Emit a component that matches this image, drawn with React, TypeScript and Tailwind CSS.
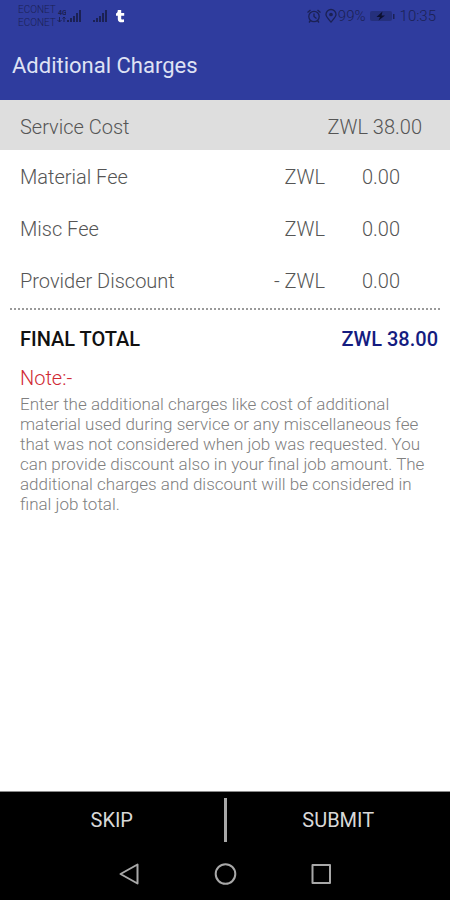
import React, { useState } from "react";

interface Charge {
  id: string;
  label: string;
  negative?: boolean;
}

const CURRENCY = "ZWL";
const SERVICE_COST = 38;

const charges: Charge[] = [
  { id: "material", label: "Material Fee" },
  { id: "misc", label: "Misc Fee" },
  { id: "discount", label: "Provider Discount", negative: true },
];

const SignalIcon: React.FC = () => (
  <svg className="h-4 w-4" viewBox="0 0 16 16" fill="currentColor" aria-hidden="true">
    <rect x="1" y="12" width="2" height="2" />
    <rect x="4" y="10" width="2" height="4" />
    <rect x="7" y="8" width="2" height="6" />
    <rect x="10" y="5" width="2" height="9" />
    <rect x="13" y="2" width="2" height="12" />
  </svg>
);

const StatusBar: React.FC = () => (
  <div className="flex h-8 items-center justify-between pl-4 pr-3.5 text-[#1b2154]">
    <div className="flex items-center">
      <div className="w-10 pl-0.5 text-[10px] leading-[13px]">
        <div>ECONET</div>
        <div>ECONET</div>
      </div>
      <div className="flex items-center">
        <svg className="h-4 w-2.5" viewBox="0 0 10 16" aria-hidden="true">
          <text x="2" y="7" fontSize="7" fontWeight="700" fill="currentColor">
            4G
          </text>
          <path d="M3.5 9v5M1.5 12l2 2 2-2M8 14V9M6.5 10.5 8 9l1.500 1.500" fill="none" stroke="currentColor" />
        </svg>
        <SignalIcon />
      </div>
      <div className="ml-2.5">
        <SignalIcon />
      </div>
      <svg className="ml-1.5 h-4 w-3" viewBox="0 0 12 16" fill="#fff" aria-hidden="true">
        <path d="M3.800 2h3.400v3h3v2.700H7.200v2.800c0 1 .8 1.300 2.800.8V14c-3.700 1-6.200-.2-6.200-3V7.700H2V5.400C3.300 5 3.800 3.700 3.800 2z" />
      </svg>
    </div>
    <div className="flex items-center">
      <svg className="h-4 w-4" viewBox="0 0 16 16" fill="none" stroke="currentColor" strokeWidth="1.300" aria-hidden="true">
        <circle cx="8" cy="8.500" r="5.200" />
        <path d="M8 5.500v3l2.500 2M1.500 4.500l3-2.500M14.500 4.500l-3-2.500M4.500 12.500 3 14.500M11.500 12.500l1.500 2" />
      </svg>
      <svg className="ml-0.5 h-4 w-3.5" viewBox="0 0 14 16" fill="none" stroke="currentColor" strokeWidth="1.300" aria-hidden="true">
        <path d="M7 14C4 10.500 2 8.700 2 6.500a5 5 0 0 1 10 0c0 2.200-2 4-5 7.500z" />
        <circle cx="7" cy="6.500" r="1.200" fill="currentColor" />
      </svg>
      <span className="text-[15px] leading-4">99%</span>
      <svg className="ml-0.5 h-4 w-7" viewBox="0 0 28 16" aria-hidden="true">
        <rect x="2" y="3" width="22" height="10" rx="2" fill="currentColor" opacity="0.45" />
        <path d="M25 6h1.500v5H25z" fill="currentColor" />
        <path d="M14.500 3.500 8.500 9h3.500l-1.500 3.500L17 7.500h-3.500z" fill="#0c1030" />
      </svg>
      <span className="ml-1 text-[15px] leading-4">10:35</span>
    </div>
  </div>
);

const App: React.FC = () => {
  const [amounts, setAmounts] = useState<Record<string, string>>({
    material: "0.00",
    misc: "0.00",
    discount: "0.00",
  });

  const total = charges.reduce((sum, charge) => {
    const value = parseFloat(amounts[charge.id]) || 0;
    return charge.negative ? sum - value : sum + value;
  }, SERVICE_COST);

  return (
    <div className="flex min-h-screen flex-col bg-white font-['Roboto',sans-serif] font-light text-[#555555]">
      <header className="bg-[#2f3c9e]">
        <StatusBar />
        <h1 className="px-3 pt-5 pb-5 text-[22px] leading-7 font-normal text-[#dfe2f4]">
          Additional Charges
        </h1>
      </header>

      <main className="flex-1">
        <div className="flex h-[50px] items-center justify-between bg-[#dedede] pt-1 pl-5 pr-7 text-xl">
          <span>Service Cost</span>
          <span>
            {CURRENCY} {SERVICE_COST.toFixed(2)}
          </span>
        </div>

        {/* Editable charges */}
        {charges.map((charge) => (
          <div key={charge.id} className="flex h-[52px] items-center pt-0.5 pl-5 pr-[50px] text-xl">
            <label htmlFor={charge.id} className="flex-1">
              {charge.label}
            </label>
            <span>
              {charge.negative && "- "}
              {CURRENCY}
            </span>
            <input
              id={charge.id}
              inputMode="decimal"
              className="w-[75px] bg-transparent text-right outline-none"
              value={amounts[charge.id]}
              onChange={(e) =>
                setAmounts((prev) => ({ ...prev, [charge.id]: e.target.value }))
              }
            />
          </div>
        ))}

        {/* Total */}
        <div className="mx-2.5 mt-0.5 border-t-2 border-dotted border-[#9a9a9a]" />
        <div className="flex h-[58px] items-center justify-between pl-5 pr-3 text-xl font-medium">
          <span className="text-[#111111]">FINAL TOTAL</span>
          <span className="text-[#141c80]">
            {CURRENCY} {total.toFixed(2)}
          </span>
        </div>

        <section className="-mt-0.5 pl-5 pr-3">
          <h2 className="text-xl leading-6 text-[#d02a34]">Note:-</h2>
          <p className="mt-1 text-[17px] leading-5 text-[#808080]">
            Enter the additional charges like cost of additional material used
            during service or any miscellaneous fee that was not considered when
            job was requested. You can provide discount also in your final job
            amount. The additional charges and discount will be considered in
            final job total.
          </p>
        </section>
      </main>

      <footer className="border-t border-[#8a8a8a] bg-black text-[#d8d8d8]">
        <div className="flex h-14 items-center">
          <button type="button" className="flex-1 text-xl font-normal">
            SKIP
          </button>
          <span className="h-11 w-[3px] bg-[#a8a8a8]" />
          <button type="button" className="flex-1 text-xl font-normal">
            SUBMIT
          </button>
        </div>
        <nav className="flex h-[52px] items-center justify-center gap-[72px] text-[#a8a8a8]">
          <button type="button" aria-label="Back">
            <svg className="h-6 w-6" viewBox="0 0 24 24" fill="none" stroke="currentColor" strokeWidth="2" strokeLinejoin="round">
              <path d="M20.500 2.500v19L3.500 12z" />
            </svg>
          </button>
          <button type="button" aria-label="Home">
            <svg className="h-6 w-6" viewBox="0 0 24 24" fill="none" stroke="currentColor" strokeWidth="2">
              <circle cx="12.500" cy="12" r="9.800" />
            </svg>
          </button>
          <button type="button" aria-label="Recent apps">
            <svg className="h-6 w-6" viewBox="0 0 24 24" fill="none" stroke="currentColor" strokeWidth="2" strokeLinejoin="round">
              <rect x="3.500" y="3" width="17.500" height="18" />
            </svg>
          </button>
        </nav>
      </footer>
    </div>
  );
};

export default App;
